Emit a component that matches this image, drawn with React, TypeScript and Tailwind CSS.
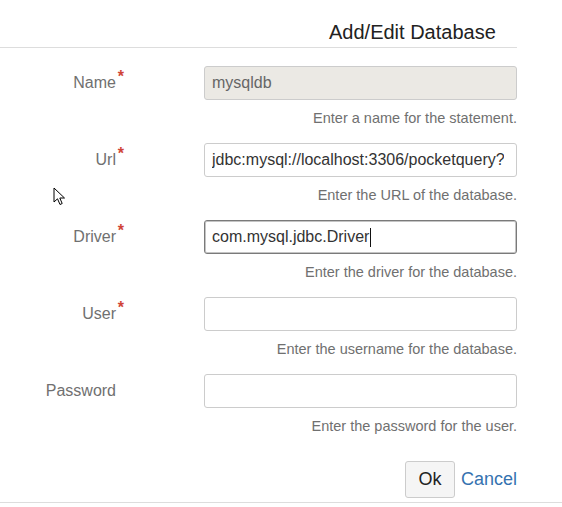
import { useState } from "react";

type Field = {
  label: string;
  required: boolean;
  value: string;
  help: string;
  disabled?: boolean;
  focused?: boolean;
};

const fields: Field[] = [
  { label: "Name", required: true, value: "mysqldb", help: "Enter a name for the statement.", disabled: true },
  { label: "Url", required: true, value: "jdbc:mysql://localhost:3306/pocketquery?autoReconnect=true", help: "Enter the URL of the database." },
  { label: "Driver", required: true, value: "com.mysql.jdbc.Driver", help: "Enter the driver for the database.", focused: true },
  { label: "User", required: true, value: "", help: "Enter the username for the database." },
  { label: "Password", required: false, value: "", help: "Enter the password for the user." },
];

function Row({ field }: { field: Field }) {
  const [value, setValue] = useState(field.value);
  return (
    <div className="mb-[15px]">
      <div className="flex items-center">
        <label className="relative w-[116px] text-right text-[16px] text-[#707070]">
          {field.label}
          {field.required && (
            <span className="absolute -right-[8px] -top-[6px] text-[16px] font-bold text-[#d04437]">*</span>
          )}
        </label>
        <div
          className={`ml-[88px] flex h-[34px] w-[313px] items-center overflow-hidden rounded-[3px] border pl-[7px] pr-[12px] ${
            field.disabled
              ? "border-[#cccccc] bg-[#ebe9e4] text-[#666]"
              : field.focused
                ? "border-[#7a7a7a] bg-white text-[#333] shadow-[inset_0_0_0_1px_#c4c4c4]"
                : "border-[#cccccc] bg-white text-[#333]"
          }`}
        >
          {field.focused ? (
            <span className="flex items-center whitespace-nowrap text-[16px]">
              {value}
              <span className="ml-[1px] inline-block h-[19px] w-[1px] bg-[#111]" />
            </span>
          ) : (
            <input
              value={value}
              disabled={field.disabled}
              onChange={(e) => setValue(e.target.value)}
              className="w-full bg-transparent text-[16px] outline-none"
            />
          )}
        </div>
      </div>
      <p className="mt-[8px] w-[517px] text-right text-[14.5px] leading-[20px] text-[#707070]">
        {field.help}
      </p>
    </div>
  );
}

export default function App() {
  return (
    <div className="relative h-[507px] w-[562px] overflow-hidden bg-white font-['Liberation_Sans',Arial,sans-serif]">
      <div className="w-[517px] border-b border-[#dddddd] pb-[3px] pl-[329px] pt-[20px]">
        <h1 className="text-[20px] leading-[24px] text-[#222]">Add/Edit Database</h1>
      </div>

      <form className="pt-[18px]">
        {fields.map((f) => (
          <Row key={f.label} field={f} />
        ))}

        <div className="flex w-[517px] items-center justify-end gap-[6px] pt-[10px]">
          <button
            type="button"
            className="h-[37px] w-[50px] rounded-[3px] border border-[#cccccc] bg-[#f5f5f5] text-[18px] text-[#222]"
          >
            Ok
          </button>
          <a href="#" className="text-[18px] text-[#3572b0]">
            Cancel
          </a>
        </div>
      </form>

      <div className="absolute bottom-[4px] left-0 right-0 border-b border-[#dddddd]" />

      {/* mouse pointer */}
      <svg
        className="absolute left-[53px] top-[187px]"
        width="14"
        height="20"
        viewBox="0 0 14 20"
      >
        <path
          d="M1 1 L1 15 L4.5 11.8 L7 17.5 L9.2 16.5 L6.8 11 L11.5 11 Z"
          fill="white"
          stroke="black"
          strokeWidth="1"
          strokeLinejoin="miter"
        />
      </svg>
    </div>
  );
}
